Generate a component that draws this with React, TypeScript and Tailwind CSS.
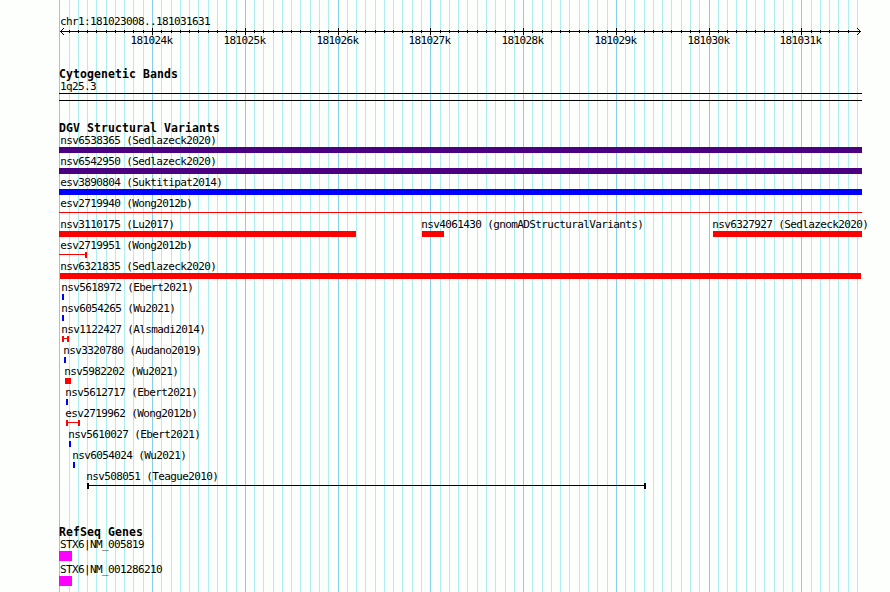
type Shape = 'box' | 'range';
type Feature = { name: string; start: number; end: number; labelX: number; color: string; shape?: Shape; openStart?: boolean; openEnd?: boolean };

const ORIGIN = 59;
const INDIGO = '#4b0082';
const RED = '#ff0000';
const BLUE = '#0000ff';

const grid = Array.from({ length: 87 }, (_, i) => i - 10).map((k) => ({
  x: Math.floor(152.53 + 9.276 * k),
  major: k % 10 === 0,
  label: k >= 0 && k % 10 === 0 ? `${181024 + k / 10}k` : null,
}));

const variants: Feature[][] = [
  [{ name: 'nsv6538365 (Sedlazeck2020)', start: 59, end: 862, labelX: 61, color: INDIGO }],
  [{ name: 'nsv6542950 (Sedlazeck2020)', start: 59, end: 862, labelX: 61, color: INDIGO }],
  [{ name: 'esv3890804 (Suktitipat2014)', start: 59, end: 862, labelX: 61, color: BLUE }],
  [{ name: 'esv2719940 (Wong2012b)', start: 59, end: 862, labelX: 61, color: RED, shape: 'range', openStart: true, openEnd: true }],
  [
    { name: 'nsv3110175 (Lu2017)', start: 59, end: 356, labelX: 61, color: RED },
    { name: 'nsv4061430 (gnomADStructuralVariants)', start: 422, end: 444, labelX: 422, color: RED },
    { name: 'nsv6327927 (Sedlazeck2020)', start: 713, end: 862, labelX: 713, color: RED },
  ],
  [{ name: 'esv2719951 (Wong2012b)', start: 59, end: 87, labelX: 61, color: RED, shape: 'range', openStart: true }],
  [{ name: 'nsv6321835 (Sedlazeck2020)', start: 60, end: 861, labelX: 61, color: RED }],
  [{ name: 'nsv5618972 (Ebert2021)', start: 62, end: 64, labelX: 62, color: BLUE }],
  [{ name: 'nsv6054265 (Wu2021)', start: 62, end: 64, labelX: 62, color: BLUE }],
  [{ name: 'nsv1122427 (Alsmadi2014)', start: 62, end: 69, labelX: 62, color: RED, shape: 'range' }],
  [{ name: 'nsv3320780 (Audano2019)', start: 64, end: 66, labelX: 64, color: BLUE }],
  [{ name: 'nsv5982202 (Wu2021)', start: 65, end: 71, labelX: 65, color: RED }],
  [{ name: 'nsv5612717 (Ebert2021)', start: 66, end: 68, labelX: 66, color: BLUE }],
  [{ name: 'esv2719962 (Wong2012b)', start: 66, end: 80, labelX: 66, color: RED, shape: 'range' }],
  [{ name: 'nsv5610027 (Ebert2021)', start: 69, end: 71, labelX: 69, color: BLUE }],
  [{ name: 'nsv6054024 (Wu2021)', start: 73, end: 75, labelX: 73, color: BLUE }],
  [{ name: 'nsv508051 (Teague2010)', start: 87, end: 646, labelX: 87, color: '#000000', shape: 'range' }],
];

const genes = ['STX6|NM_005819', 'STX6|NM_001286210'];

function Label({ children }: { children: string }) {
  return (
    <div className="h-[13px] w-0 whitespace-pre text-[11px] leading-[13px] tracking-[-0.622px]">{children}</div>
  );
}

function Title({ children }: { children: string }) {
  return <h2 className="h-3 whitespace-pre text-[11.5px] font-bold leading-3 tracking-[0.077px]">{children}</h2>;
}

function Glyph({ f }: { f: Feature }) {
  const width = f.end - f.start;
  if (f.shape !== 'range') return <div className="h-1.5" style={{ width, background: f.color }} />;
  return (
    <div className="flex h-1.5" style={{ width, color: f.color }}>
      {!f.openStart && <span className="h-1.5 w-0.5 bg-current" />}
      <span className="mt-0.5 h-px flex-1 bg-current" />
      {!f.openEnd && <span className="h-1.5 w-0.5 bg-current" />}
    </div>
  );
}

function VariantRow({ row }: { row: Feature[] }) {
  return (
    <div className="grid h-[21px] grid-cols-[100%]">
      {row.map((f) => (
        <div key={f.name} className="col-start-1 row-start-1 w-0" style={{ marginLeft: f.start - ORIGIN }}>
          <div style={{ marginLeft: f.labelX - f.start - 0.7 }}>
            <Label>{f.name}</Label>
          </div>
          <Glyph f={f} />
        </div>
      ))}
    </div>
  );
}

function Ruler() {
  return (
    <svg width="803" height="7" viewBox="59 28 803 7" shapeRendering="crispEdges" className="block" aria-hidden="true">
      <rect x="60" y="31" width="801" height="1" />
      {[1, 2, 3].map((d) => (
        <g key={d}>
          <rect x={60 + d} y={31 - d} width="1" height="1" />
          <rect x={60 + d} y={31 + d} width="1" height="1" />
          <rect x={860 - d} y={31 - d} width="1" height="1" />
          <rect x={860 - d} y={31 + d} width="1" height="1" />
        </g>
      ))}
      {grid.slice(1, -1).map((g) => (
        <rect key={g.x} x={g.x} y={g.major ? 28 : 30} width="1" height={g.major ? 7 : 3} />
      ))}
    </svg>
  );
}

export default function App() {
  return (
    <main className="relative h-[592px] w-[890px] overflow-hidden bg-[#fdfffc] font-['DejaVu_Sans_Mono',monospace] text-black">
      <svg className="absolute inset-0" width="890" height="592" shapeRendering="crispEdges" aria-hidden="true">
        {grid.map((g) => (
          <rect key={g.x} x={g.x} y="0" width="1" height="592" fill={g.major ? '#87ceeb' : '#afeeee'} />
        ))}
      </svg>
      <div className="relative ml-[59px] w-[803px] pt-[15px]">
        <div className="ml-px"><Label>chr1:181023008..181031631</Label></div>
        <Ruler />
        <div className="-mt-px ml-[71.5px] flex h-[34px]">
          {grid.filter((g) => g.label).map((g, i, all) => (
            <div key={g.x} className="shrink-0" style={{ width: i < all.length - 1 ? all[i + 1].x - g.x : 42 }}>
              <Label>{g.label!}</Label>
            </div>
          ))}
        </div>
        <section className="h-[54px]">
          <Title>Cytogenetic Bands</Title>
          <div className="ml-px"><Label>1q25.3</Label></div>
          <div className="h-2 border-y border-black" />
        </section>
        <section className="h-[404px]">
          <Title>DGV Structural Variants</Title>
          {variants.map((row) => <VariantRow key={row[0].name} row={row} />)}
        </section>
        <section>
          <Title>RefSeq Genes</Title>
          {genes.map((gene) => (
            <div key={gene} className="h-[25px]">
              <div className="ml-px"><Label>{gene}</Label></div>
              <div className="h-2.5 w-[13px] bg-[#ff00ff]" />
            </div>
          ))}
        </section>
      </div>
    </main>
  );
}
